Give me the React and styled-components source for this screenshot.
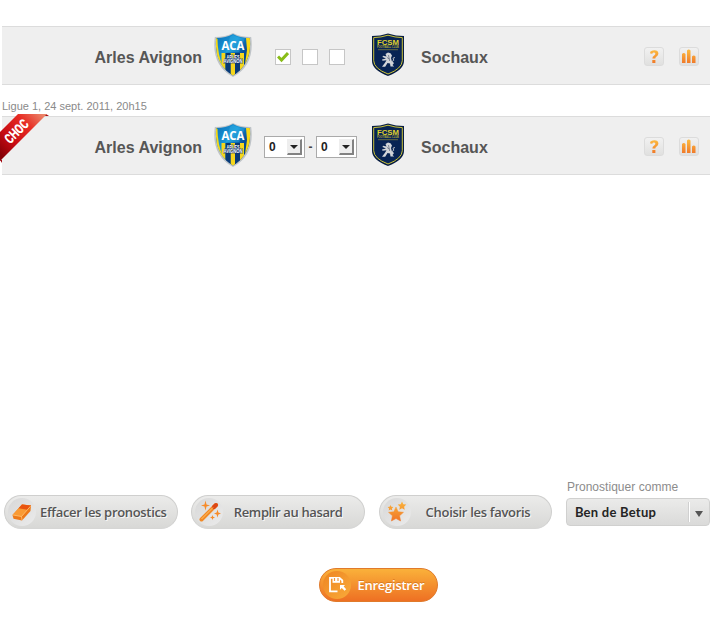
import React from 'react';
import styled, { createGlobalStyle, css } from 'styled-components';

const GlobalStyle = createGlobalStyle`
  * { box-sizing: border-box; }
  body { margin: 0; background: #fff; font-family: "Liberation Sans", Arial, sans-serif; }
  button { font: inherit; border: 0; padding: 0; margin: 0; }
`;

const Page = styled.main`
  width: 710px;
  height: 625px;
  padding-top: 26px;
  display: flex;
  flex-direction: column;
  overflow: hidden;
`;

const MatchRow = styled.section`
  position: relative;
  flex: none;
  margin-left: 2px;
  height: 59px;
  padding: 1px 11px 0 0;
  display: grid;
  grid-template-columns: 200px 61px 95px 61px 1fr auto;
  align-items: center;
  background: #efefef;
  border-top: 1px solid #dcdcdc;
  border-bottom: 1px solid #dcdcdc;
`;

const TeamName = styled.span`
  font-weight: bold;
  font-size: 16px;
  line-height: 20px;
  letter-spacing: 0.02px;
  color: #565656;
  text-align: ${(p) => p.$align || 'left'};
  margin: ${(p) => (p.$align ? '3px 0 0' : '3px 0 0 2px')};
  white-space: nowrap;
`;

const CrestBox = styled.div`
  height: 46px;
  margin-top: -2px;
  padding-left: ${(p) => p.$left}px;
  svg { display: block; }
`;

const MatchDate = styled.p`
  margin: 14px 0 3px 2px;
  height: 14px;
  font-size: 11px;
  line-height: 14px;
  letter-spacing: 0;
  color: #8a8a8a;
`;

const Checks = styled.div`
  display: flex;
  gap: 11px;
  padding: 1px 0 0 12px;
`;

const CheckBox = styled.span`
  width: 16px;
  height: 16px;
  background: #fff;
  border: 1px solid #c6c6c6;
  svg { display: block; margin: 1px 0 0 1px; }
`;

const Scores = styled.div`
  display: flex;
  align-items: center;
  justify-content: space-between;
  width: 93px;
  margin: 2px 0 0 1px;
  font-size: 12px;
  font-weight: bold;
  color: #444;
`;

const ScoreSelect = styled.div`
  width: 41px;
  height: 22px;
  padding: 2px 2px 2px 4px;
  display: flex;
  justify-content: space-between;
  align-items: center;
  background: #fff;
  border: 1px solid #aaa;
  font-size: 12px;
  line-height: 16px;
  color: #222;
`;

const ScoreArrow = styled.span`
  width: 15px;
  height: 16px;
  display: flex;
  align-items: center;
  justify-content: center;
  background: #eee;
  border: solid;
  border-width: 1px 2px 2px 1px;
  border-color: #eee #828282 #828282 #eee;
`;

const Triangle = styled.i`
  width: 0;
  height: 0;
  border: solid transparent;
  border-width: ${(p) => p.$h}px ${(p) => p.$w}px 0;
  border-top-color: ${(p) => p.$color};
`;

const Tools = styled.div`
  display: flex;
  gap: 15px;
`;

const ToolButton = styled.button`
  width: 20px;
  height: 19px;
  border-radius: 3px;
  background: linear-gradient(#f1f1f1, #e0e0df);
  border: 1px solid #dcdcdc;
  svg { display: block; }
`;

const Ribbon = styled.svg`
  position: absolute;
  left: -2px;
  top: -3px;
  overflow: visible;
`;

const Actions = styled.div`
  margin-top: 305px;
  padding-left: 4px;
  display: flex;
  align-items: flex-end;
`;

const pill = css`
  display: flex;
  align-items: center;
  height: 34px;
  border-radius: 17px;
  font-family: "Open Sans", "Noto Sans", sans-serif;
  font-weight: 600;
  font-size: 13px;
  line-height: 18px;
  white-space: nowrap;
`;

const ActionButton = styled.button`
  ${pill}
  flex: none;
  width: 173.5px;
  margin: 0 13.8px 3px 0;
  padding-left: 3px;
  border: 1px solid #cfcfce;
  border-bottom-color: #d6d6d5;
  background: linear-gradient(#ebebea, #d8d8d6);
  color: #555;
  text-shadow: 1px 1px 0 #f8f8f8;
`;

const Medallion = styled.span`
  flex: none;
  width: 28px;
  height: 28px;
  border-radius: 50%;
  background: linear-gradient(135deg, #d8d8d8, #ebebeb);
  svg { display: block; }
`;

const ActionLabel = styled.span`
  display: block;
  margin-left: ${(p) => p.$left}px;
  letter-spacing: ${(p) => p.$spacing}px;
`;

const Picker = styled.div`
  width: 144px;
  flex: none;
`;

const PickerLabel = styled.div`
  height: 18px;
  font-size: 12px;
  line-height: 14px;
  letter-spacing: 0.03px;
  color: #8c8c8c;
  padding-left: 1px;
`;

const PickerBox = styled.div`
  height: 28px;
  margin-bottom: 6px;
  padding-left: 8px;
  display: flex;
  align-items: center;
  justify-content: space-between;
  background: linear-gradient(#ebebea, #dadad9);
  border: 1px solid #d0d0cf;
  border-radius: 4px;
  font-family: Lato, sans-serif;
  font-weight: 700;
  font-size: 13px;
  letter-spacing: 0.25px;
  color: #242424;
`;

const PickerArrow = styled.span`
  width: 20px;
  height: 20px;
  padding: 3px 0 0;
  display: flex;
  align-items: center;
  justify-content: center;
  border-left: 1px solid #fff;
  box-shadow: -1px 0 #d0d0d0;
`;

const SaveButton = styled.button`
  ${pill}
  flex: none;
  width: 119.5px;
  margin: 36px 0 0 318.5px;
  padding-left: 3px;
  border: 1px solid #e07a2b;
  background: linear-gradient(#fab13a, #ee7023);
  color: #fff;
  text-shadow: 0 -1px 0 #d97a20;
`;

const SaveIcon = styled(Medallion)`
  background: linear-gradient(135deg, #ee8522, #f9ab3a);
`;

function ArlesCrest() {
  return (
    <svg width="38" height="46" viewBox="0 0 38 46">
      <defs>
        <linearGradient id="arlesBlue" x1="0" y1="0" x2="1" y2="1">
          <stop offset="0" stopColor="#0768b0" />
          <stop offset=".38" stopColor="#1b98d8" />
          <stop offset=".6" stopColor="#064f98" />
          <stop offset="1" stopColor="#052b68" />
        </linearGradient>
        <clipPath id="arlesShape">
          <path d="M2.2 6Q12 6 19 2Q26 6 35.8 6Q38.5 32 19 43.5Q-.5 32 2.2 6Z" />
        </clipPath>
      </defs>
      <path d="M.8 5Q12 5 19 1Q26 5 37.2 5Q41 33 19 45Q-3 33 .8 5Z" fill="#bfc4c8" />
      <g clipPath="url(#arlesShape)">
        <path d="M0 0H38V46H0Z" fill="url(#arlesBlue)" />
        <path d="M1 5L3.5 7Q3.5 22 9 35L4 34ZM32 6H37V25L31 32L33 18Z" fill="#f6d816" />
        <path d="M7.5 21H11.5V39H7.5ZM16.5 21H21V45H16.5ZM26 21H30V38H26Z" fill="#f5d61c" />
        <path d="M11.5 21H16.5V44H11.5ZM21 21H26V43H21Z" fill="#083a78" />
        <path d="M16 5L19 3Q27 7 31 6L25 20H12Z" fill="#3ac4f2" opacity=".3" />
      </g>
      <text x="19" y="17.5" textAnchor="middle" textLength="23" lengthAdjust="spacingAndGlyphs" fontFamily="Open Sans, sans-serif" fontSize="12" fontWeight="700" fill="#fff">ACA</text>
      <g fontFamily="Liberation Sans, sans-serif" fontWeight="bold" fontSize="5" textAnchor="middle" fill="#fff" stroke="#082f6b" strokeWidth=".8" paintOrder="stroke">
        <text x="19" y="26.5" textLength="13" lengthAdjust="spacingAndGlyphs">ARLES</text>
        <text x="19" y="31" textLength="19" lengthAdjust="spacingAndGlyphs">AVIGNON</text>
      </g>
    </svg>
  );
}

function SochauxCrest() {
  return (
    <svg width="34" height="46" viewBox="0 0 34 46">
      <path d="M1 4Q9 4 17 1.5Q25 4 33 4V29Q33 38 17 44Q1 38 1 29Z" fill="#071c42" />
      <path d="M2.7 5.6Q10 5.5 17 3.2Q24 5.5 31.3 5.6V28.7Q31 36.7 17 42Q3 36.7 2.7 28.7Z" fill="#082454" stroke="#c9c23a" strokeWidth="1" />
      <g fontFamily="Liberation Sans, sans-serif" textAnchor="middle" fontWeight="bold" fill="#e0d32e">
        <text x="17" y="13" textLength="22" lengthAdjust="spacingAndGlyphs" fontSize="7">FCSM</text>
        <text x="17" y="16" textLength="22" lengthAdjust="spacingAndGlyphs" fontSize="3" opacity=".75">FOOTBALL CLUB</text>
      </g>
      <path d="M7 17.7H27" stroke="#827d3e" strokeWidth=".8" />
      <path d="M14.5 22L17 20.5L19.5 21.2L21 23.5L20 26L20.8 29L23 31L21.5 33L23.2 34.5H19.5L19 31.5L16.5 31L14.2 34.8H11L14 30.8L15.5 28.2L11.5 28.8L11 27.5L15 26.5L11.5 25L12 23.7L15.5 24.5Z" fill="#d2d5d9" />
      <path d="M20.5 30L22.8 28.2L22 26.2L24 25.5" fill="none" stroke="#b9bec6" strokeWidth="1" />
      <path d="M17.5 23L18.6 29M16 25.5L18.5 27" fill="none" stroke="#465269" strokeWidth=".6" />
    </svg>
  );
}

const OrangeGradient = ({ id }) => (
  <defs>
    <linearGradient id={id} gradientUnits="userSpaceOnUse" x1="0" y1="3" x2="0" y2={id === 'stars' ? 23 : 16}>
      <stop stopColor="#fbb63d" />
      <stop offset="1" stopColor="#f07527" />
    </linearGradient>
  </defs>
);

function RowTools({ row }) {
  return (
    <Tools>
      <ToolButton aria-label="Aide">
        <svg width="18" height="17" viewBox="0 0 18 17">
          <OrangeGradient id={`help${row}`} />
          <path d="M5.2 5.4V3.7Q6.6 2.2 9.2 2.2Q13.4 2.2 13.4 5.6Q13.4 7.5 11.3 8.7Q10.3 9.3 10.3 10.6H7.4Q7.3 8.5 9.2 7.4Q10.4 6.6 10.4 5.8Q10.4 4.5 8.8 4.5Q7.6 4.5 7.3 5.7ZM7.3 12H10.4V15H7.3Z" fill={`url(#help${row})`} />
        </svg>
      </ToolButton>
      <ToolButton aria-label="Statistiques">
        <svg width="18" height="17" viewBox="0 0 18 17">
          <OrangeGradient id={`bars${row}`} />
          <path d="M2 6Q3.8 4 5.5 6V15H2ZM7 2.5Q8.8 .5 10.5 2.5V15H7ZM12 8.5Q13.8 6.5 15.5 8.5V15H12Z" fill={`url(#bars${row})`} />
        </svg>
      </ToolButton>
    </Tools>
  );
}

function Match({ row, choc, children }) {
  return (
    <MatchRow>
      <TeamName $align="right">Arles Avignon</TeamName>
      <CrestBox $left={11.5}><ArlesCrest /></CrestBox>
      {children}
      <CrestBox $left={13}><SochauxCrest /></CrestBox>
      <TeamName>Sochaux</TeamName>
      <RowTools row={row} />
      {choc && (
        <Ribbon width="50" height="50" viewBox="0 0 50 50">
          <defs>
            <linearGradient id="ribbonRed" gradientUnits="userSpaceOnUse" x1="0" y1="40" x2="42" y2="0">
              <stop stopColor="#860006" />
              <stop offset=".3" stopColor="#c70b13" />
              <stop offset=".68" stopColor="#e72b23" />
              <stop offset="1" stopColor="#eb8469" />
            </linearGradient>
          </defs>
          <path d="M42 0H46L49 2H40ZM0 45L2 46V49L0 46Z" fill="#a50a12" />
          <path d="M18 0H47L0 47V18Z" fill="url(#ribbonRed)" />
          <text transform="translate(10.3 30.5) rotate(-45)" textLength="27.5" lengthAdjust="spacingAndGlyphs" fontFamily="Roboto, sans-serif" fontWeight="900" fontSize="14" fill="#fff">CHOC</text>
        </Ribbon>
      )}
    </MatchRow>
  );
}

const Score = () => (
  <ScoreSelect>0<ScoreArrow><Triangle $w={4} $h={4} $color="#222" /></ScoreArrow></ScoreSelect>
);

const EraserIcon = () => (
  <svg width="28" height="28" viewBox="0 0 28 28">
    <path d="M4.5 17L14 6.5L23 7.5L22.5 13L14 22.5L5.5 20.8Z" fill="#ed7918" />
    <path d="M4.5 17L14 6.5L23 7.5L13.5 18.5Z" fill="#f99a34" />
    <path d="M10.5 10.3L14 6.5L23 7.5L19.2 11.8Z" fill="#e95410" />
    <path d="M5 17L13.5 18.5L22.5 8.2M13.5 18.5L14 22" fill="none" stroke="#ffc577" strokeWidth=".8" />
  </svg>
);

const WandIcon = () => (
  <svg width="28" height="28" viewBox="0 0 28 28">
    <path d="M6.5 21.5L21 7" stroke="#f18a27" strokeWidth="4" strokeLinecap="round" />
    <path d="M19 9L21 7" stroke="#dc4613" strokeWidth="4" strokeLinecap="round" />
    <path d="M6.5 21L18 9.5" stroke="#ffc369" strokeWidth="1" />
    <path d="M10.5 2.5L11.5 6.4L15 7.5L11.5 8.6L10.5 12.5L9.5 8.6L6 7.5L9.5 6.4ZM22.5 11.5L23.4 14.6L26 15.5L23.4 16.4L22.5 19.5L21.6 16.4L19 15.5L21.6 14.6ZM17.5 17L18.2 18.8L20 19.5L18.2 20.2L17.5 22L16.8 20.2L15 19.5L16.8 18.8Z" fill="#f78b28" />
  </svg>
);

const StarsIcon = () => (
  <svg width="28" height="28" viewBox="0 0 28 28">
    <OrangeGradient id="stars" />
    <g fill="url(#stars)">
      <path d="M13 9L15.2 13.7L20.5 14.3L16.6 17.8L17.6 23L13 20.5L8.4 23L9.4 17.8L5.5 14.3L10.8 13.7Z" stroke="url(#stars)" strokeWidth=".5" strokeLinejoin="round" />
      <path d="M19 3.5L20.3 6.2L23.3 6.6L21.1 8.7L21.7 11.7L19 10.2L16.3 11.7L16.9 8.7L14.7 6.6L17.7 6.2Z" />
      <path d="M7.5 7L8.4 8.8L10.4 9.1L8.9 10.5L9.3 12.5L7.5 11.5L5.7 12.5L6.1 10.5L4.6 9.1L6.6 8.8Z" />
    </g>
  </svg>
);

const DiskIcon = () => (
  <svg width="28" height="28" viewBox="0 0 28 28">
    <path d="M14.5 20.3H7V6.8H16.5L19.3 9.5V12" fill="none" stroke="#fff" strokeWidth="1.8" />
    <path d="M9.5 6H17V11.8H9.5Z" fill="#fff" />
    <path d="M11.5 7V10M15 7V10" stroke="#f2993c" strokeWidth="1.2" />
    <path d="M17 14H22L20.7 15.4L23.2 18.2L21.5 19.8L18.8 17L17 18.8Z" fill="#fff" />
  </svg>
);

const actions = [
  { label: 'Effacer les pronostics', Icon: EraserIcon, left: 4, spacing: -0.32 },
  { label: 'Remplir au hasard', Icon: WandIcon, left: 10.5, spacing: -0.37 },
  { label: 'Choisir les favoris', Icon: StarsIcon, left: 15, spacing: -0.3 },
];

export default function App() {
  return (
    <>
      <GlobalStyle />
      <Page>
        <Match row="1">
          <Checks>
            <CheckBox>
              <svg width="12" height="12" viewBox="0 0 12 12">
                <path d="M1 5.5L4.5 9L11 2" fill="none" stroke="#89bd18" strokeWidth="3" />
              </svg>
            </CheckBox>
            <CheckBox />
            <CheckBox />
          </Checks>
        </Match>
        <MatchDate>Ligue 1, 24 sept. 2011, 20h15</MatchDate>
        <Match row="2" choc>
          <Scores><Score />-<Score /></Scores>
        </Match>
        <Actions>
          {actions.map(({ label, Icon, left, spacing }) => (
            <ActionButton key={label}>
              <Medallion><Icon /></Medallion>
              <ActionLabel $left={left} $spacing={spacing}>{label}</ActionLabel>
            </ActionButton>
          ))}
          <Picker>
            <PickerLabel>Pronostiquer comme</PickerLabel>
            <PickerBox>
              Ben de Betup
              <PickerArrow><Triangle $w={4.5} $h={6} $color="#555" /></PickerArrow>
            </PickerBox>
          </Picker>
        </Actions>
        <SaveButton>
          <SaveIcon><DiskIcon /></SaveIcon>
          <ActionLabel $left={7} $spacing={-0.26}>Enregistrer</ActionLabel>
        </SaveButton>
      </Page>
    </>
  );
}
